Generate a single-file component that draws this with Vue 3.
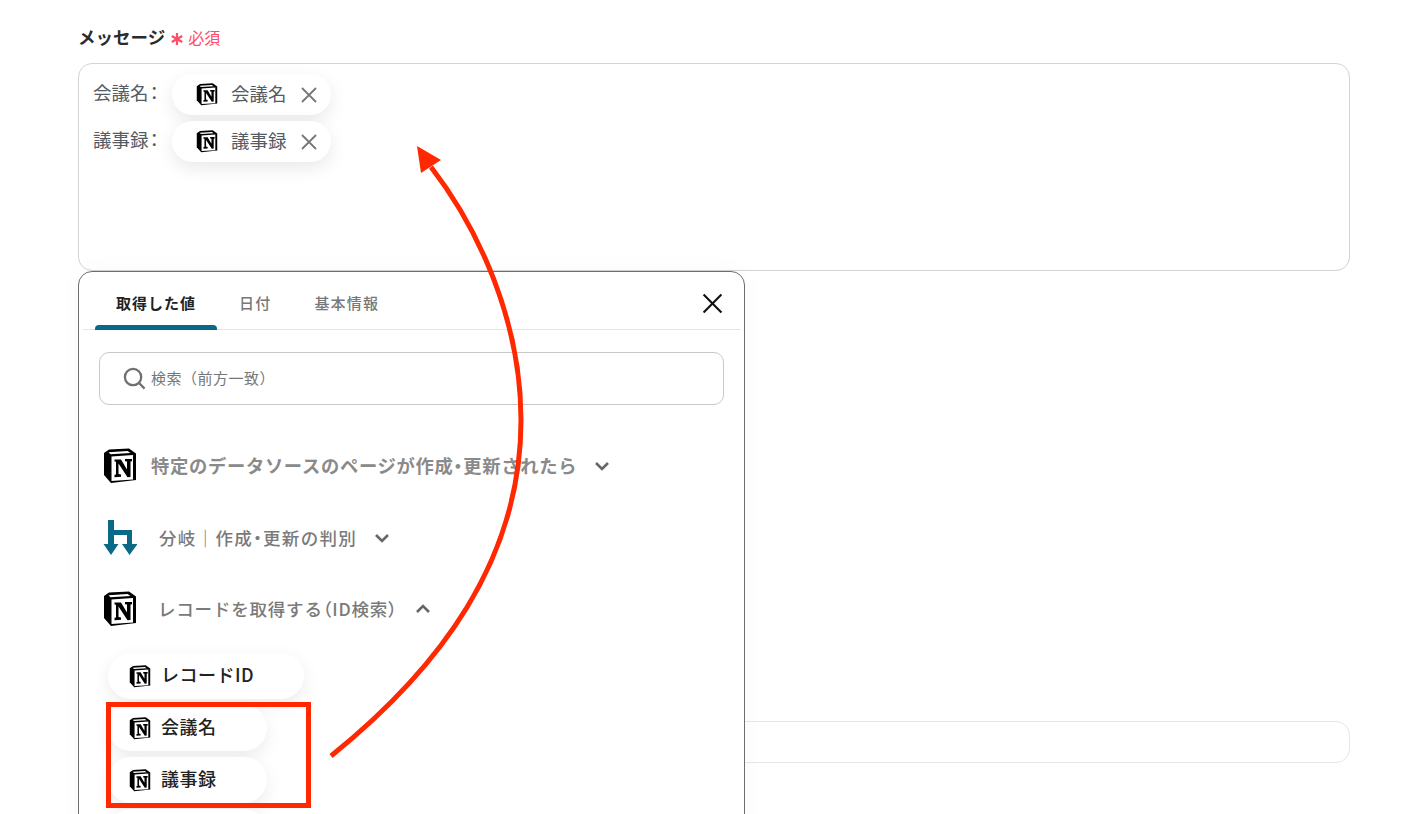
<script setup>
const vars = [
  { label: '会議名', chip: '会議名' },
  { label: '議事録', chip: '議事録' },
]
const tabs = ['取得した値', '日付', '基本情報']
const fields = [
  { text: 'レコードID', cls: 'wide' },
  { text: '会議名', cls: '' },
  { text: '議事録', cls: '' },
  { text: '', cls: '' },
]
</script>

<template>
  <div class="page">
    <div class="field-label">
      <span class="label-text">メッセージ</span>
      <span class="req">
        <svg class="star" viewBox="0 0 14 14"><path d="M7 1V13M1.800 4L12.200 10M12.200 4L1.800 10" /></svg>
        必須
      </span>
    </div>

    <div class="textarea">
      <div v-for="v in vars" :key="v.label" class="var-row">
        <span class="var-label">{{ v.label }}<span class="palt colon">&#xFF1A;</span></span>
        <span class="var-chip">
          <svg class="n-icon chip-icon" viewBox="0 0 34 36"><use href="#notion" /></svg>
          <span class="var-chip-text">{{ v.chip }}</span>
          <svg class="chip-x" viewBox="0 0 16 16"><path d="M1 1L15 15M15 1L1 15" /></svg>
        </span>
      </div>
    </div>

    <div class="second-field"></div>

    <div class="popup">
      <div class="tabs">
        <div v-for="(t, i) in tabs" :key="t" class="tab" :class="{ active: i === 0 }">{{ t }}</div>
        <svg class="close" viewBox="0 0 20 20"><path d="M1.500 1.500L18.500 18.500M18.500 1.500L1.500 18.500" /></svg>
      </div>

      <div class="search">
        <svg class="search-icon" viewBox="0 0 24 24"><circle cx="10.500" cy="10.500" r="8.500" /><path d="M17 17L22.500 22.500" /></svg>
        <span class="search-text">検索&#xFF08;前方一致&#xFF09;</span>
      </div>

      <div class="group g1">
        <svg class="n-icon big" viewBox="0 0 34 36"><use href="#notion" /></svg>
        <span class="group-text t1">特定のデータソースのページが作成<span class="palt">・</span>更新されたら</span>
        <svg class="chev" viewBox="0 0 16 10"><path d="M2 2L8 8L14 2" /></svg>
      </div>
      <div class="group g2">
        <svg class="branch" viewBox="0 0 34 36">
          <path d="M5 0H11V10H29V24H34.500L26.500 35L19 24H24V15H11V24H15.500L8 35L0.500 24H5Z" />
        </svg>
        <span class="group-text t2">分岐&#xFF5C;作成<span class="palt">・</span>更新の判別</span>
        <svg class="chev" viewBox="0 0 16 10"><path d="M2 2L8 8L14 2" /></svg>
      </div>
      <div class="group g3">
        <svg class="n-icon big" viewBox="0 0 34 36"><use href="#notion" /></svg>
        <span class="group-text t3">レコードを取得する<span class="palt">&#xFF08;</span>ID検索<span class="palt">&#xFF09;</span></span>
        <svg class="chev up" viewBox="0 0 16 10"><path d="M2 8L8 2L14 8" /></svg>
      </div>

      <div class="field-list">
        <div v-for="f in fields" :key="f.text" class="field-chip" :class="f.cls">
          <svg v-if="f.text" class="n-icon small" viewBox="0 0 34 36"><use href="#notion" /></svg>
          <span class="field-chip-text">{{ f.text }}</span>
        </div>
      </div>
    </div>

    <svg class="annotation" viewBox="0 0 1404 814">
      <rect x="108.500" y="704.500" width="200" height="101" class="anno-box" />
      <path d="M331 756C440 668 521 560 521 420C521 320 478 228 431 167" class="anno-line" />
      <path d="M417 146L441 160L421 173Z" class="anno-head" />
    </svg>

    <svg class="defs" width="0" height="0">
      <defs>
        <g id="notion">
          <path d="M6 1.500L26 0.500L33 5.500V32L8 35L1 27V5Z" fill="#000" />
          <path d="M8.500 8.500L30 7V31.500L8.500 33Z" fill="#fff" />
          <path d="M5.500 4.300L24.500 3L27.500 5L7.500 6.300Z" fill="#fff" />
          <path d="M11.500 11.500H18L24 21.500V13.500L22 13.200V11H29V13.200L27.500 13.500V29L24.500 29.200L15.500 15.500V26L18 26.500V28.800L11.500 29.200V26.800L13 26.500V13.800L11.500 13.500Z" fill="#000" />
        </g>
      </defs>
    </svg>
  </div>
</template>

<style scoped>
.page {
  position: relative;
  box-sizing: border-box;
  width: 1404px;
  height: 814px;
  overflow: hidden;
  padding: 24px 54px 0 78px;
  background: #fff;
  font-family: "Noto Sans CJK JP", "Noto Sans", sans-serif;
  color: #333;
}
.field-label {
  display: flex;
  align-items: center;
  height: 26px;
  margin-bottom: 13px;
}
.label-text {
  position: relative;
  top: -1px;
  font-size: 17.500px;
  font-weight: 700;
  color: #2b2b2b;
}
.req {
  margin-left: 5px;
  font-size: 16px;
  color: #ff4d68;
  display: flex;
  align-items: center;
}
.star {
  width: 14px;
  height: 14px;
  margin-right: 4px;
  position: relative;
  top: 2px;
  fill: none;
  stroke: #ff4d68;
  stroke-width: 2.200;
}
.textarea {
  box-sizing: border-box;
  height: 208px;
  border: 1px solid #d2d2d8;
  border-radius: 14px;
  padding: 10px 0 0 14px;
}
.var-row {
  display: flex;
  height: 41px;
  margin-bottom: 6px;
}
.var-label {
  width: 79px;
  font-size: 18.500px;
  line-height: 37px;
  white-space: nowrap;
  color: #555b63;
}
.colon {
  margin-left: 1px;
}
.var-chip {
  box-sizing: border-box;
  width: 159px;
  height: 41px;
  display: flex;
  align-items: center;
  padding-left: 24px;
  border-radius: 21px;
  background: #fff;
  box-shadow: 0 6px 18px rgba(0, 0, 0, 0.09);
}
.n-icon {
  display: block;
  flex: none;
}
.chip-icon {
  width: 22px;
  height: 23px;
}
.var-chip-text {
  margin-left: 13px;
  padding-bottom: 4px;
  font-size: 18.500px;
  color: #555b63;
}
.chip-x {
  width: 16px;
  height: 16px;
  margin-left: 14px;
  fill: none;
  stroke: #777;
  stroke-width: 1.800;
}
.second-field {
  box-sizing: border-box;
  height: 42px;
  margin-top: 450px;
  border: 1px solid #e6e6e6;
  border-radius: 14px;
}
.popup {
  position: absolute;
  left: 78px;
  top: 271px;
  box-sizing: border-box;
  width: 667px;
  height: 620px;
  background: #fff;
  border: 1px solid #6d6d6d;
  border-radius: 14px;
  box-shadow: 0 0 24px rgba(0, 0, 0, 0.03);
  padding: 0 4px;
}
.tabs {
  position: relative;
  box-sizing: border-box;
  display: flex;
  height: 58px;
  padding-left: 12px;
  gap: 1px;
  border-bottom: 1px solid #e4e4e4;
}
.tab {
  padding: 20px 21px 0;
  font-size: 15px;
  font-weight: 500;
  letter-spacing: 1.200px;
  color: #777;
}
.tab.active {
  position: relative;
  font-weight: 700;
  letter-spacing: 1px;
  color: #222;
}
.tab.active::after {
  content: "";
  position: absolute;
  left: 0;
  right: 0;
  bottom: -1px;
  height: 5px;
  border-radius: 4px 4px 0 0;
  background: #0a6a85;
}
.close {
  position: absolute;
  right: 17px;
  top: 21px;
  width: 21px;
  height: 21px;
  fill: none;
  stroke: #111;
  stroke-width: 2;
}
.search {
  box-sizing: border-box;
  display: flex;
  align-items: center;
  height: 53px;
  margin: 22px 16px 0;
  padding-left: 23px;
  border: 1px solid #c8c8c8;
  border-radius: 10px;
  font-size: 15px;
  color: #777;
}
.search-text {
  padding-bottom: 2px;
  letter-spacing: 0.500px;
}
.search-icon {
  width: 23px;
  height: 23px;
  margin-right: 5px;
  fill: none;
  stroke: #707070;
  stroke-width: 2.400;
}
.group {
  display: flex;
  align-items: center;
  padding-left: 20px;
  height: 38px;
}
.g1 { margin-top: 42px; }
.g2 { margin-top: 34px; }
.g3 { margin-top: 33px; }
.n-icon.big {
  width: 34px;
  height: 36px;
}
.branch {
  width: 34px;
  height: 36px;
  flex: none;
  fill: #0a6a85;
}
.group-text {
  margin-left: 22px;
  padding-bottom: 2px;
  font-size: 17.500px;
  font-weight: 500;
  letter-spacing: 0.800px;
  color: #7a7a7a;
}
.group-text.t1 {
  margin-left: 14px;
  font-size: 18.300px;
  letter-spacing: 0.700px;
  font-weight: 700;
  color: #8a8a8a;
}
.group-text.t2 {
  letter-spacing: 1.300px;
}
.group-text.t3 {
  margin-left: 21px;
  letter-spacing: 0.800px;
}
.palt {
  font-feature-settings: "palt";
}
.chev {
  width: 16px;
  height: 10px;
  margin-left: 17px;
  fill: none;
  stroke: #666;
  stroke-width: 2.600;
}
.field-list {
  display: flex;
  flex-direction: column;
  align-items: flex-start;
  gap: 6px;
  margin: 25px 0 0 25px;
}
.field-chip {
  box-sizing: border-box;
  display: flex;
  align-items: center;
  width: 159px;
  height: 46px;
  padding-left: 21px;
  border-radius: 23px;
  background: #fff;
  box-shadow: 0 6px 18px rgba(0, 0, 0, 0.08);
  font-size: 18px;
  font-weight: 500;
  color: #222;
}
.field-chip-text {
  padding-bottom: 4px;
  letter-spacing: 0.500px;
}
.field-chip.wide {
  width: 196px;
}
.n-icon.small {
  width: 22px;
  height: 23px;
  margin-right: 10px;
}
.annotation {
  position: absolute;
  left: 0;
  top: 0;
  width: 1404px;
  height: 814px;
  pointer-events: none;
}
.anno-box {
  fill: none;
  stroke: #ff2800;
  stroke-width: 5;
}
.anno-line {
  fill: none;
  stroke: #ff2800;
  stroke-width: 5;
}
.anno-head {
  fill: #ff2800;
}
.defs {
  position: absolute;
}
</style>
